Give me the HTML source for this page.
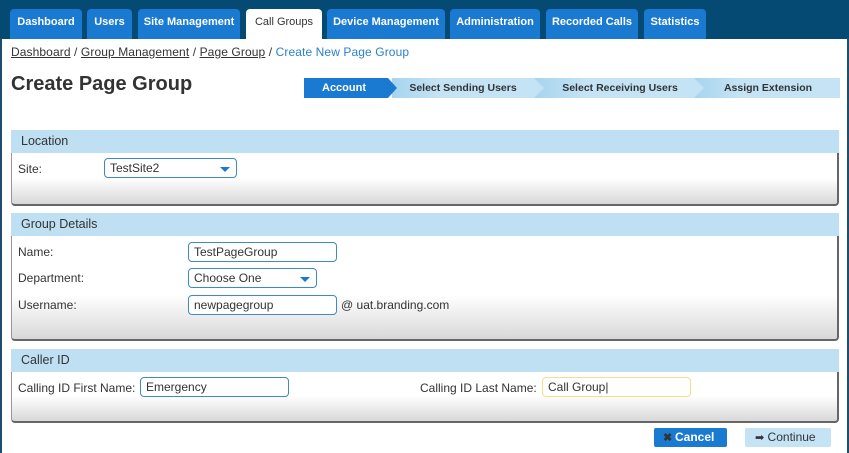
<!DOCTYPE html>
<html><head><style>
*{box-sizing:border-box;margin:0;padding:0}
body{width:849px;height:453px;background:#fff;font-family:"Liberation Sans",Arial,sans-serif;position:relative;overflow:hidden;font-size:12px;color:#333}
.top{position:absolute;left:0;top:0;width:849px;height:39px;background:#044a73}
.tab{position:absolute;top:9px;height:30px;background:#1a7ad1;color:#fff;font-weight:bold;font-size:11px;line-height:27px;text-align:center;border-radius:4px 4px 0 0}
.tab.on{background:#fff;color:#333;font-weight:normal}
.frame{position:absolute;left:0;top:38px;width:849px;height:415px;border-left:2px solid #1e4d70;border-right:2px solid #1e4d70}
.bc{position:absolute;left:11px;top:45px;font-size:12px;color:#333;letter-spacing:0.1px}
.bc u{text-decoration:underline}
.bc span{color:#2a82c9}
h1{position:absolute;left:11px;top:73px;font-size:20px;font-weight:bold;color:#333}
.wiz{position:absolute;top:78px;height:20px;font-size:11px;line-height:20px;text-align:center}
.panel{position:absolute;left:11px;width:828px;border-right:2px solid #666;border-bottom:2px solid #666;border-left:1px solid #999;border-radius:0 0 4px 4px;background:linear-gradient(#fff 0,#fff 65%,#d8d8d8 100%)}
.ph{height:23px;background:#bfe0f2;font-size:12.5px;line-height:23px;padding-left:10px;color:#333;margin-left:-1px;margin-right:-2px}
.lbl{position:absolute;font-size:12px}
.in{position:absolute;height:20px;border:1px solid #3e89c9;border-radius:4px;font-size:12px;line-height:18px;padding-left:5px;background:#fff}
.sel::after{content:"";position:absolute;right:6px;top:8px;border:5px solid transparent;border-top:5px solid #1a7ad1;border-bottom:0}
.btn{position:absolute;top:428px;height:19px;font-size:12px;line-height:18px;border-radius:2px}
</style></head><body>
<div class="top"></div>
<div class="tab" style="left:10px;width:72px">Dashboard</div>
<div class="tab" style="left:87px;width:45px">Users</div>
<div class="tab" style="left:138px;width:102px">Site Management</div>
<div class="tab on" style="left:246px;width:76px">Call Groups</div>
<div class="tab" style="left:327px;width:118px">Device Management</div>
<div class="tab" style="left:450px;width:90px">Administration</div>
<div class="tab" style="left:546px;width:92px">Recorded Calls</div>
<div class="tab" style="left:644px;width:62px">Statistics</div>
<div class="frame"></div>
<div class="bc"><u>Dashboard</u> / <u>Group Management</u> / <u>Page Group</u> / <span>Create New Page Group</span></div>
<h1>Create Page Group</h1>
<svg style="position:absolute;left:304px;top:78px" width="536" height="20">
<defs><linearGradient id="g" x1="0" x2="1"><stop offset="0" stop-color="#a6d4ee"/><stop offset="0.3" stop-color="#c4e3f4"/></linearGradient></defs>
<polygon points="88,0 536,0 536,20 88,20" fill="#c4e3f4"/>
<polygon points="88,0 230,0 240,10 230,20 88,20" fill="url(#g)"/>
<polygon points="240,0 390,0 400,10 390,20 240,20 230,20 240,10 230,0" fill="url(#g)"/>
<polygon points="400,0 526,0 536,10 526,20 400,20 390,20 400,10 390,0" fill="url(#g)"/>
<polygon points="0,0 84,0 93,10 84,20 0,20" fill="#1a7ad1"/>
</svg>
<div class="wiz" style="left:304px;width:80px;color:#fff;font-weight:bold">Account</div>
<div class="wiz" style="left:398px;width:130px;color:#333;font-weight:bold;font-size:10.5px">Select Sending Users</div>
<div class="wiz" style="left:555px;width:130px;color:#333;font-weight:bold;font-size:10.5px">Select Receiving Users</div>
<div class="wiz" style="left:710px;width:116px;color:#333;font-weight:bold;font-size:10.5px">Assign Extension</div>

<div class="panel" style="top:130px;height:76px"><div class="ph">Location</div></div>
<div class="lbl" style="left:18px;top:162px">Site:</div>
<div class="in sel" style="left:104px;top:158px;width:133px">TestSite2</div>

<div class="panel" style="top:213px;height:128px"><div class="ph">Group Details</div></div>
<div class="lbl" style="left:18px;top:245px">Name:</div>
<div class="in" style="left:188px;top:242px;width:149px">TestPageGroup</div>
<div class="lbl" style="left:18px;top:271px">Department:</div>
<div class="in sel" style="left:188px;top:268px;width:129px">Choose One</div>
<div class="lbl" style="left:18px;top:298px">Username:</div>
<div class="in" style="left:188px;top:295px;width:149px">newpagegroup</div>
<div class="lbl" style="left:341px;top:298px">@ uat.branding.com</div>

<div class="panel" style="top:349px;height:74px"><div class="ph">Caller ID</div></div>
<div class="lbl" style="left:18px;top:381px">Calling ID First Name:</div>
<div class="in" style="left:140px;top:377px;width:149px">Emergency</div>
<div class="lbl" style="left:420px;top:381px">Calling ID Last Name:</div>
<div class="in" style="left:542px;top:377px;width:149px;border-color:#f0e08a">Call Group|</div>

<div class="btn" style="left:654px;width:73px;background:#1a7ad1;color:#fff;padding-left:9px;font-weight:bold"><span style="display:inline-block;width:12px;font-size:11px;color:#333">✖</span>Cancel</div>
<div class="btn" style="left:745px;width:86px;background:#c4e3f4;color:#333;padding-left:10px"><span style="font-size:11px">➡</span> Continue</div>
</body></html>
